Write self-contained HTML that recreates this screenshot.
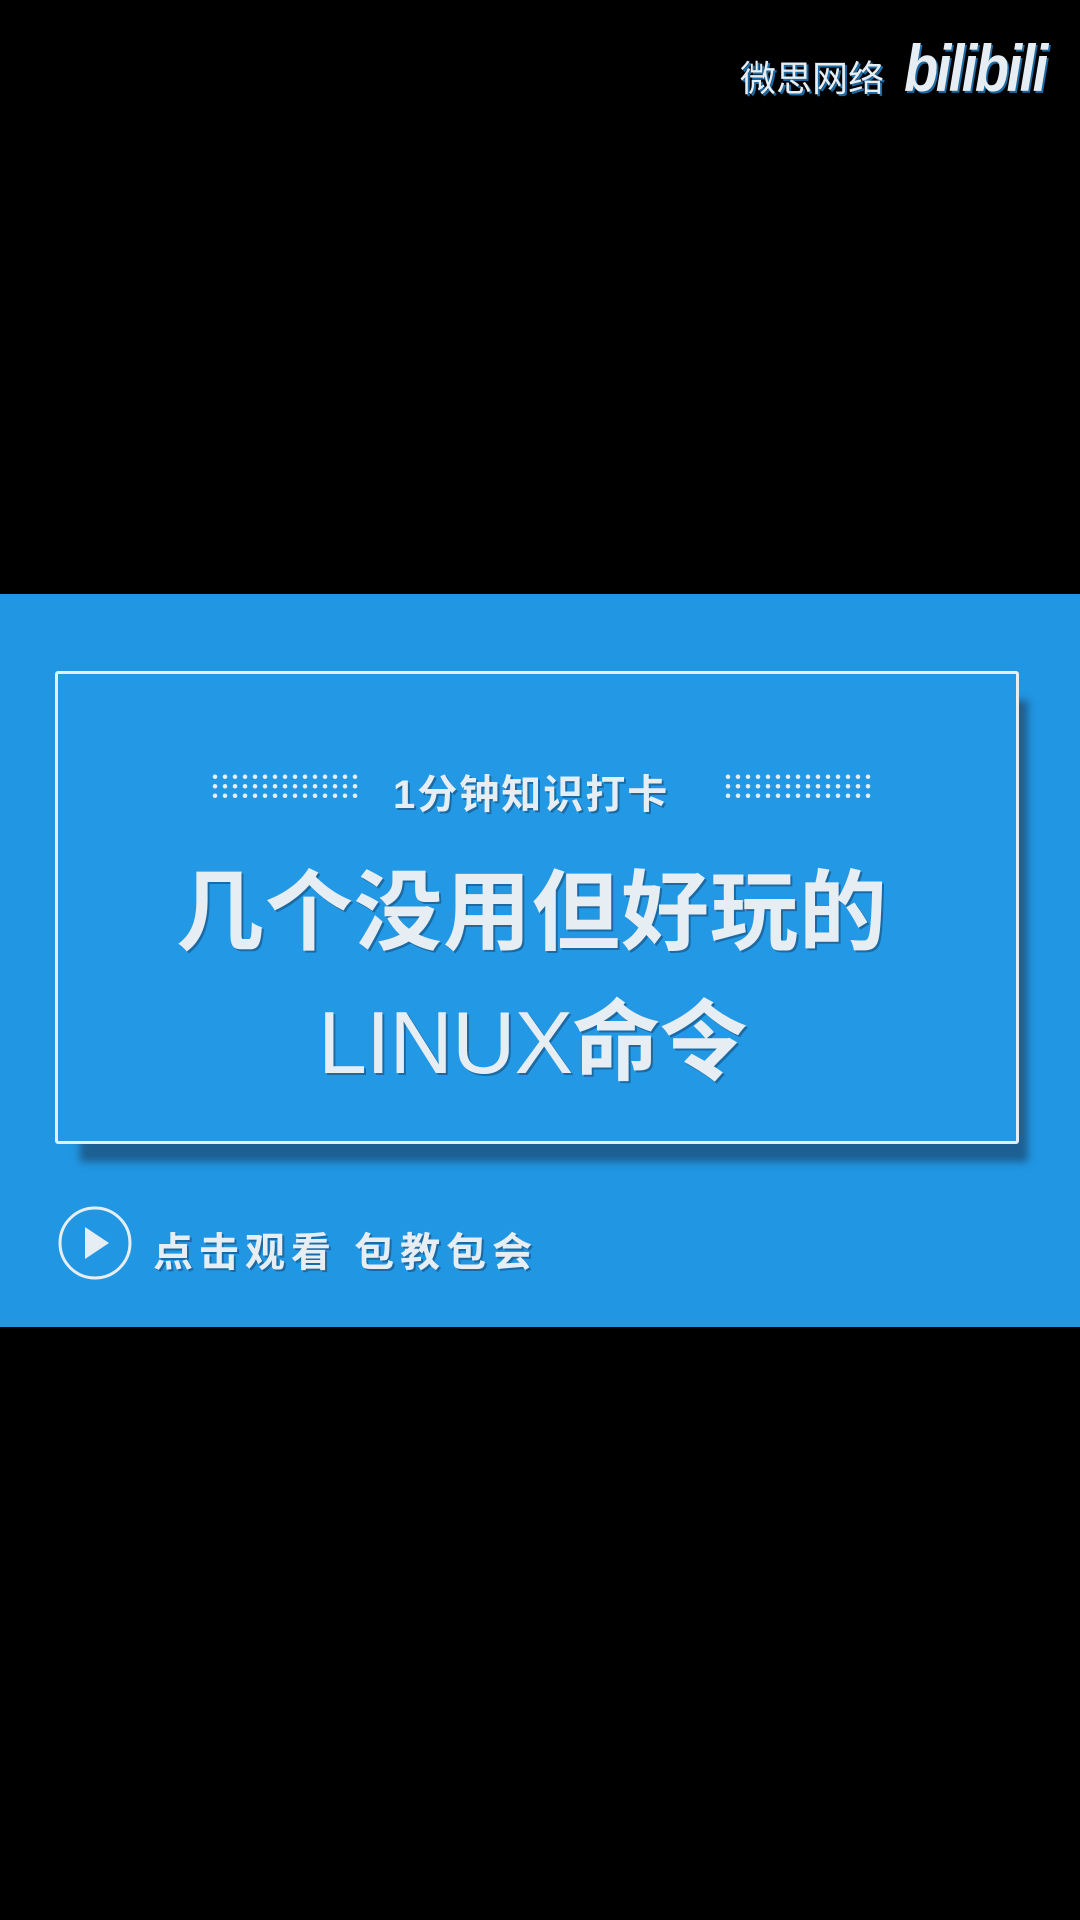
<!DOCTYPE html>
<html><head><meta charset="utf-8"><style>
html,body{margin:0;padding:0;background:#000;width:1080px;height:1920px;overflow:hidden;position:relative;font-family:"Liberation Sans","Noto Sans CJK SC",sans-serif}
.band{position:absolute;left:0;top:594px;width:1080px;height:733px;background:#2196e3}
.shadow{position:absolute;left:80px;top:700px;width:948px;height:462px;background:#1d5f92;filter:blur(4px)}
.card{position:absolute;left:55px;top:671px;width:958px;height:467px;border:3px solid #e6eef3;background:#2399e6;border-radius:3px}
.dots{position:absolute;top:772px;width:152px;height:28px;background-image:radial-gradient(circle,#e6eef3 2px,transparent 2.5px);background-size:10px 9.5px}
.t{position:absolute;color:#e6eef3;white-space:nowrap;font-weight:bold;text-shadow:2px 2px 0 #1c6aa3}
</style></head><body>
<div class="t" style="left:740px;top:50px;font-size:36px;font-weight:normal;color:#e6eef3;text-shadow:2px 2px 0 #1c6aa3">微思网络</div>
<div class="t" style="left:904px;top:30px;font-size:66px;font-style:italic;letter-spacing:-3px;font-family:'Liberation Sans',sans-serif;transform:scaleX(0.85);transform-origin:left">bilibili</div>
<div class="band"></div>
<div class="shadow"></div>
<div class="card"></div>
<div class="dots" style="left:210px"></div>
<div class="dots" style="left:723px"></div>
<div class="t" style="left:393px;top:762px;font-size:40px;letter-spacing:2px">1分钟知识打卡</div>
<div class="t" style="left:176px;top:842px;font-size:88px;letter-spacing:1px">几个没用但好玩的</div>
<div class="t" style="left:318px;top:972px;font-size:88px;font-weight:normal;letter-spacing:-1px">LINUX<b>命令</b></div>
<svg style="position:absolute;left:57px;top:1205px" width="76" height="76"><circle cx="38" cy="38" r="35" fill="none" stroke="#e6eef3" stroke-width="3"/><path d="M28 22 L52 38 L28 54 Z" fill="#e6eef3"/></svg>
<div class="t" style="left:153px;top:1220px;font-size:40px;letter-spacing:6px">点击观看 包教包会</div>
</body></html>
